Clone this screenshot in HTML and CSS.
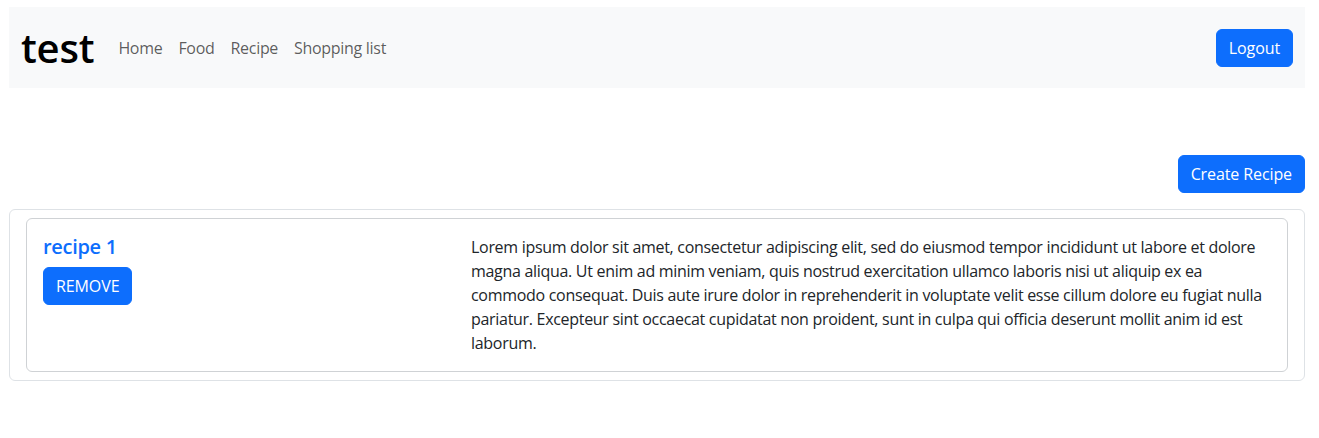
FILE: index.html
```html
<!DOCTYPE html>
<html lang="en">
<head>
<meta charset="utf-8">
<title>test</title>
<link rel="stylesheet" href="styles.css">
</head>
<body>
<nav class="navbar">
  <div class="nav-left">
    <a class="brand" href="#">test</a>
    <ul class="nav-links">
      <li><a href="#">Home</a></li>
      <li><a href="#">Food</a></li>
      <li><a href="#">Recipe</a></li>
      <li><a href="#">Shopping list</a></li>
    </ul>
  </div>
  <button class="btn">Logout</button>
</nav>
<main class="content">
  <div class="actions">
    <button class="btn">Create Recipe</button>
  </div>
  <section class="list-card">
    <article class="recipe-card">
      <div class="recipe-head">
        <a class="recipe-title" href="#">recipe 1</a>
        <button class="btn btn-remove">REMOVE</button>
      </div>
      <p class="recipe-text">Lorem ipsum dolor sit amet, consectetur adipiscing elit, sed do eiusmod tempor incididunt ut labore et dolore magna aliqua. Ut enim ad minim veniam, quis nostrud exercitation ullamco laboris nisi ut aliquip ex ea commodo consequat. Duis aute irure dolor in reprehenderit in voluptate velit esse cillum dolore eu fugiat nulla pariatur. Excepteur sint occaecat cupidatat non proident, sunt in culpa qui officia deserunt mollit anim id est laborum.</p>
    </article>
  </section>
</main>
</body>
</html>
```

FILE: styles.css
```css
* { box-sizing: border-box; }
body {
  margin: 0;
  padding: 7px 14px 0 9px;
  font-family: "Open Sans", "Noto Sans", sans-serif;
  font-size: 16px;
  line-height: 24px;
  letter-spacing: -0.3px;
  color: #212529;
  background: #fff;
}
a { text-decoration: none; }
.navbar {
  height: 81px;
  background: #f8f9fa;
  display: flex;
  align-items: center;
  justify-content: space-between;
  padding: 0 12px;
}
.nav-left { display: flex; align-items: center; }
.brand {
  font-size: 40px;
  line-height: 48px;
  font-weight: 600;
  color: #000;
  margin-right: 16px;
  letter-spacing: -0.2px;
}
.nav-links {
  list-style: none;
  margin: 0;
  padding: 0;
  display: flex;
}
.nav-links a {
  display: block;
  padding: 8px;
  color: rgba(0,0,0,.65);
}
.btn {
  font-family: inherit;
  font-size: 16px;
  line-height: 24px;
  letter-spacing: -0.1px;
  color: #fff;
  background: #0d6efd;
  border: 1px solid #0d6efd;
  border-radius: 6px;
  padding: 6px 12px;
  cursor: pointer;
}
.actions {
  display: flex;
  justify-content: flex-end;
  margin-top: 67px;
  margin-bottom: 16px;
}
.list-card {
  border: 1px solid #dee2e6;
  border-radius: 6px;
  padding: 8px 16px;
}
.recipe-card {
  border: 1px solid #cfd2d5;
  border-radius: 6px;
  padding: 16px;
  display: grid;
  grid-template-columns: 412px 1fr;
  column-gap: 16px;
}
.recipe-head { display: flex; flex-direction: column; align-items: flex-start; }
.recipe-title {
  font-size: 20px;
  line-height: 24px;
  font-weight: 600;
  color: #0d6efd;
  margin-bottom: 8px;
}
.recipe-text { margin: 0; }
```
